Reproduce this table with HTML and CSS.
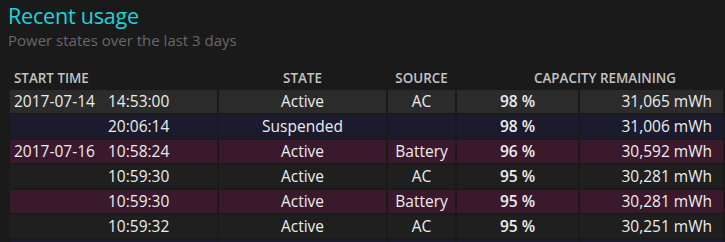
FILE: index.html
```html
<!DOCTYPE html>
<html>
<head>
<meta charset="utf-8">
<link rel="stylesheet" href="styles.css">
</head>
<body>
<h1 class="title">Recent usage</h1>
<p class="subtitle">Power states over the last 3 days</p>
<table class="usage">
  <colgroup>
    <col class="c-time"><col class="c-state"><col class="c-source"><col class="c-pct"><col class="c-mwh">
  </colgroup>
  <thead>
    <tr>
      <th class="h-time">START TIME</th>
      <th>STATE</th>
      <th>SOURCE</th>
      <th class="h-cap" colspan="2">CAPACITY REMAINING</th>
    </tr>
  </thead>
  <tbody>
    <tr class="ac first">
      <td class="time"><span class="date">2017-07-14</span>14:53:00</td>
      <td>Active</td><td>AC</td><td class="pct">98 %</td><td class="mwh">31,065 mWh</td>
    </tr>
    <tr class="susp">
      <td class="time"><span class="date"></span>20:06:14</td>
      <td>Suspended</td><td></td><td class="pct">98 %</td><td class="mwh">31,006 mWh</td>
    </tr>
    <tr class="batt">
      <td class="time"><span class="date">2017-07-16</span>10:58:24</td>
      <td>Active</td><td>Battery</td><td class="pct">96 %</td><td class="mwh">30,592 mWh</td>
    </tr>
    <tr class="ac">
      <td class="time"><span class="date"></span>10:59:30</td>
      <td>Active</td><td>AC</td><td class="pct">95 %</td><td class="mwh">30,281 mWh</td>
    </tr>
    <tr class="batt">
      <td class="time"><span class="date"></span>10:59:30</td>
      <td>Active</td><td>Battery</td><td class="pct">95 %</td><td class="mwh">30,281 mWh</td>
    </tr>
    <tr class="ac">
      <td class="time"><span class="date"></span>10:59:32</td>
      <td>Active</td><td>AC</td><td class="pct">95 %</td><td class="mwh">30,251 mWh</td>
    </tr>
    <tr class="susp tail">
      <td class="time"></td>
      <td></td><td></td><td></td><td></td>
    </tr>
  </tbody>
</table>
</body>
</html>
```

FILE: styles.css
```css
html, body {
  margin: 0;
  padding: 0;
  background: #1a1a1a;
  overflow: hidden;
}
body {
  padding: 0 8px;
  font-family: "Open Sans", "Noto Sans", sans-serif;
  color: #ececec;
}
.title {
  margin: 0;
  padding-top: 2px;
  font-size: 21.5px;
  font-weight: 400;
  line-height: 28px;
  letter-spacing: -0.2px;
  color: #1cd5dc;
}
.subtitle {
  margin: 0;
  font-size: 15px;
  line-height: 20px;
  color: #686868;
}
.usage {
  margin-top: 16px;
  border-collapse: separate;
  border-spacing: 2px;
  table-layout: fixed;
  width: 717px;
}
.c-time { width: 207px; }
.c-state { width: 167px; }
.c-source { width: 67px; }
.c-pct { width: 121px; }
.c-mwh { width: auto; }
.usage th {
  font-size: 13.4px;
  font-weight: 600;
  color: #c4c4c4;
  text-align: center;
  height: 20px;
  padding: 0;
  line-height: 20px;
}
.usage th.h-time {
  text-align: left;
  padding-left: 4px;
}
.usage th.h-cap {
  padding-left: 30px;
}
.usage td {
  height: 23px;
  padding: 0;
  font-size: 15.5px;
  line-height: 23px;
  text-align: center;
  white-space: nowrap;
}
.usage td.time {
  text-align: left;
  padding-left: 4px;
}
.date {
  display: inline-block;
  width: 94px;
}
.usage td.pct {
  font-weight: 600;
}
.usage td.mwh {
  text-align: right;
  padding-right: 11px;
}
.ac td { background: #1f1f1f; }
.ac.first td { background: #2b2b2b; }
.susp td { background: #1c1b2d; }
.batt td { background: #3a192c; }
```
